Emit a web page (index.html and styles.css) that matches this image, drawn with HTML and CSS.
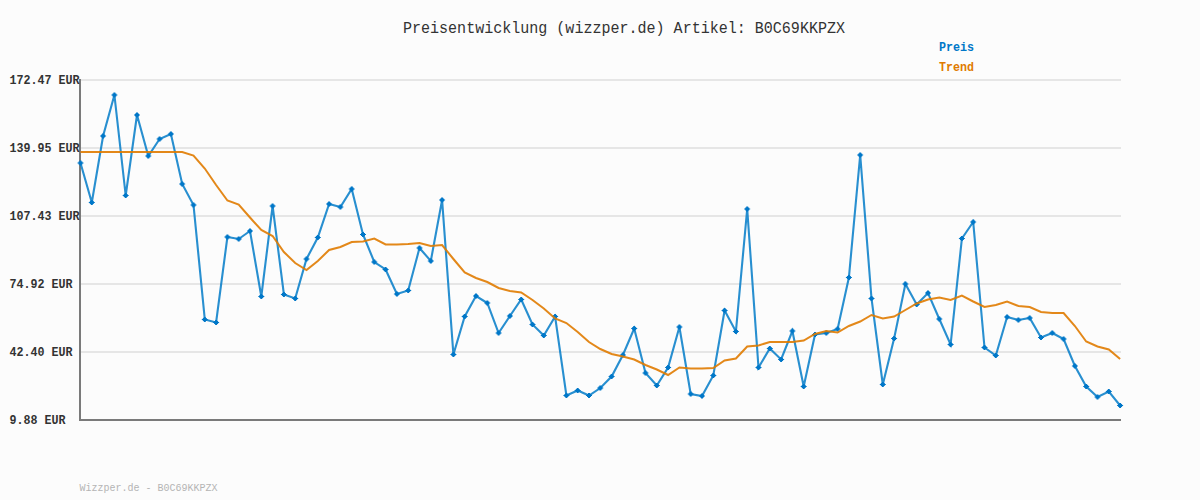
FILE: index.html
```html
<!DOCTYPE html>
<html lang="de">
<head>
<meta charset="utf-8">
<title>Preisentwicklung</title>
<link rel="stylesheet" href="styles.css">
</head>
<body>
<svg class="chart" width="1200" height="500" viewBox="0 0 1200 500" xmlns="http://www.w3.org/2000/svg">
  <defs>
    <marker id="dot" markerUnits="userSpaceOnUse" markerWidth="8" markerHeight="8" refX="4" refY="4" overflow="visible">
      <path class="dot" d="M3 1.5h2v1h1v1h1v1h-1v1h-1v1h-2v-1h-1v-1h-1v-1h1v-1h1z"/>
    </marker>
  </defs>
  <text class="title" x="403" y="33" textLength="442" lengthAdjust="spacingAndGlyphs">Preisentwicklung (wizzper.de) Artikel: B0C69KKPZX</text>
  <text class="legend preis" x="939" y="51" textLength="35" lengthAdjust="spacingAndGlyphs">Preis</text>
  <text class="legend trend" x="939" y="71" textLength="35" lengthAdjust="spacingAndGlyphs">Trend</text>
  <g class="grid">
    <path d="M81 80H1121"/><path d="M81 148H1121"/><path d="M81 216H1121"/><path d="M81 284H1121"/><path d="M81 352H1121"/>
  </g>
  <path class="axis" d="M80 79V420H1121"/>
  <g class="ylabels">
    <text x="9.5" y="84" textLength="70" lengthAdjust="spacingAndGlyphs">172.47 EUR</text>
    <text x="9.5" y="152" textLength="70" lengthAdjust="spacingAndGlyphs">139.95 EUR</text>
    <text x="9.5" y="220" textLength="70" lengthAdjust="spacingAndGlyphs">107.43 EUR</text>
    <text x="9.5" y="288" textLength="63" lengthAdjust="spacingAndGlyphs">74.92 EUR</text>
    <text x="9.5" y="356" textLength="63" lengthAdjust="spacingAndGlyphs">42.40 EUR</text>
    <text x="9.5" y="424" textLength="56" lengthAdjust="spacingAndGlyphs">9.88 EUR</text>
  </g>
  <polyline class="line-preis" points="80.5,163 91.8,202.5 103.1,136 114.4,95 125.7,195.5 137,115 148.3,156 159.6,139 170.9,134 182.2,184 193.5,205 204.8,319.5 216.1,322.5 227.4,237 238.7,239 250,231 261.3,296.5 272.6,206 283.9,294.5 295.2,298.5 306.5,259 317.8,237.5 329.1,204 340.4,207 351.7,189 363,234.5 374.3,262 385.6,269.5 396.9,294 408.2,290.5 419.5,248 430.8,261 442.1,200 453.4,354.5 464.7,316.5 476,296 487.3,303 498.6,333 509.9,316 521.2,299.5 532.5,324.5 543.8,335.5 555.1,316.5 566.4,395.5 577.7,390.5 589,395.5 600.3,388 611.6,376.5 622.9,355 634.2,328.5 645.5,373 656.8,385.5 668.1,367.5 679.4,327 690.7,394 702,396 713.3,375.5 724.6,310.5 735.9,331.5 747.2,209 758.5,367.5 769.8,348.5 781.1,359.5 792.4,331 803.7,386.5 815,334.5 826.3,333 837.6,329 848.9,277.5 860.2,155 871.5,298.5 882.8,384.5 894.1,338.5 905.4,284 916.7,304.5 928,293 939.3,319 950.6,344.5 961.9,238.5 973.2,222 984.5,347.5 995.8,355.5 1007.1,317 1018.4,320 1029.7,318 1041,337.5 1052.3,333 1063.6,339 1074.9,366 1086.2,386.5 1097.5,397 1108.8,391.5 1120.1,405.5"/>
  <polyline class="line-trend" points="80.5,152 182.2,152 193.5,155.5 204.8,168.5 216.1,185 227.4,200.5 238.7,204.5 250,217.5 261.3,230 272.6,236 283.9,252 295.2,263 306.5,270 317.8,261 329.1,250 340.4,247 351.7,242 363,241.5 374.3,238.5 385.6,244.5 396.9,244.5 408.2,244 419.5,243 430.8,246 442.1,245 453.4,259 464.7,272.5 476,278 487.3,282 498.6,288 509.9,291 521.2,292.5 532.5,300 543.8,308.5 555.1,318.5 566.4,323 577.7,332 589,342 600.3,349 611.6,354 622.9,356.5 634.2,359.5 645.5,365 656.8,369.5 668.1,375 679.4,367.5 690.7,368.5 702,368.5 713.3,368 724.6,360.5 735.9,358.5 747.2,346.5 758.5,345.5 769.8,342 781.1,342 792.4,342 803.7,340.5 815,334 826.3,331 837.6,332.5 848.9,326 860.2,321.5 871.5,315 882.8,318.5 894.1,316.5 905.4,310 916.7,303.5 928,299.5 939.3,297.5 950.6,300 961.9,295.5 973.2,301.5 984.5,307 995.8,305 1007.1,301.5 1018.4,306 1029.7,307 1041,312 1052.3,313 1063.6,313 1074.9,326 1086.2,341.5 1097.5,346.5 1108.8,349.5 1120.1,359"/>
  <text class="footer" x="79.5" y="491" textLength="138" lengthAdjust="spacingAndGlyphs">Wizzper.de - B0C69KKPZX</text>
</svg>
</body>
</html>
```
FILE: styles.css
```css
html, body {
  margin: 0;
  padding: 0;
  background: #fcfcfc;
}
.chart {
  display: block;
  background: #fcfcfc;
  font-family: "Liberation Mono", "DejaVu Sans Mono", monospace;
}
.title {
  font-size: 16px;
  fill: #333333;
}
.legend {
  font-size: 13px;
  font-weight: 700;
}
.preis { fill: #0077c8; }
.trend { fill: #e07b00; }
.grid path {
  fill: none;
  stroke: #e6e6e6;
  stroke-width: 2;
}
.axis {
  fill: none;
  stroke: #7a7a7a;
  stroke-width: 2;
}
.ylabels text {
  font-size: 13px;
  font-weight: 700;
  fill: #333333;
}
.line-preis {
  fill: none;
  stroke: #0a7fca;
  stroke-width: 2.1;
  stroke-opacity: 0.88;
  stroke-linejoin: miter;
  marker-start: url(#dot);
  marker-mid: url(#dot);
  marker-end: url(#dot);
}
.dot { fill: #0077c8; }
.line-trend {
  fill: none;
  stroke: #e07b00;
  stroke-width: 2;
  stroke-opacity: 0.9;
}
.footer {
  font-size: 11px;
  fill: #b4b4b4;
}
```
